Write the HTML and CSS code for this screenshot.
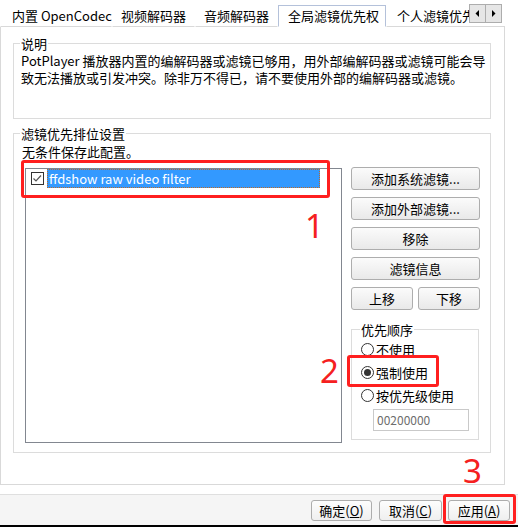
FILE: index.html
```html
<!DOCTYPE html>
<html lang="zh-CN">
<head>
    <meta charset="UTF-8">
    <title>全局滤镜优先权</title>
    <link rel="stylesheet" href="styles.css">
</head>
<body>
    <div class="tabbar">
        <div class="tabs">
            <div class="tab tab-codec">内置 OpenCodec</div>
            <div class="tab tab-video">视频解码器</div>
            <div class="tab tab-audio">音频解码器</div>
            <div class="tab tab-global active">全局滤镜优先权</div>
            <div class="tab tab-user">个人滤镜优先权</div>
        </div>
        <div class="arrows">
            <span class="arrow">
                <svg width="5" height="7" viewBox="0 0 5 7"><path d="M4 0v7L0.5 3.5z" fill="#000"/></svg>
            </span>
            <span class="arrow">
                <svg width="5" height="7" viewBox="0 0 5 7"><path d="M1 0v7l3.5-3.5z" fill="#000"/></svg>
            </span>
        </div>
    </div>

    <div class="panel">
        <fieldset class="group info">
            <legend>说明</legend>
            <p>PotPlayer 播放器内置的编解码器或滤镜已够用，用外部编解码器或滤镜可能会导<br>致无法播放或引发冲突。除非万不得已，请不要使用外部的编解码器或滤镜。</p>
        </fieldset>

        <fieldset class="group order">
            <legend>滤镜优先排位设置</legend>
            <p class="note">无条件保存此配置。</p>
            <div class="order-row">
                <div class="listbox">
                    <div class="item">
                        <span class="check">
                            <svg width="13" height="13" viewBox="0 0 13 13">
                                <rect x="0.5" y="0.5" width="12" height="12" fill="#fff" stroke="#333"/>
                                <path d="M2.5 6.5l2.5 2.5 5-5.5" fill="none" stroke="#555" stroke-width="1.2"/>
                            </svg>
                        </span>
                        <span class="item-label">ffdshow raw video filter</span>
                    </div>
                </div>
                <div class="side">
                    <button class="btn">添加系统滤镜...</button>
                    <button class="btn">添加外部滤镜...</button>
                    <button class="btn">移除</button>
                    <button class="btn">滤镜信息</button>
                    <div class="btn-pair">
                        <button class="btn">上移</button>
                        <button class="btn">下移</button>
                    </div>
                    <fieldset class="group priority">
                        <legend>优先顺序</legend>
                        <div class="radio"><span class="dot"></span>不使用</div>
                        <div class="radio"><span class="dot checked"></span>强制使用</div>
                        <div class="radio"><span class="dot"></span>按优先级使用</div>
                        <div class="merit">00200000</div>
                    </fieldset>
                </div>
            </div>
        </fieldset>
    </div>

    <div class="footer">
        <button class="btn ok">确定(<u>O</u>)</button>
        <button class="btn cancel">取消(<u>C</u>)</button>
        <button class="btn apply">应用(<u>A</u>)</button>
    </div>

    <div class="mark mark-1"></div>
    <div class="num num-1">1</div>
    <div class="mark mark-2"></div>
    <div class="num num-2">2</div>
    <div class="mark mark-3"></div>
    <div class="num num-3">3</div>
</body>
</html>
```

FILE: styles.css
```css
* {
    box-sizing: border-box;
}

body {
    margin: 0;
    width: 518px;
    height: 527px;
    overflow: hidden;
    position: relative;
    background: #fff;
    color: #000;
    font: 13px/17px "Noto Sans CJK SC", "Microsoft YaHei", sans-serif;
}

/* tab strip */
.tabbar {
    display: flex;
    width: 505px;
    height: 27px;
}

.tabs {
    display: flex;
    width: 469px;
    overflow: hidden;
    padding-top: 5px;
}

.tab {
    flex: none;
    height: 22px;
    line-height: 20px;
    white-space: nowrap;
    border: 1px solid transparent;
    border-bottom: 1px solid #d9d9d9;
}

.tab-codec { width: 112px; padding-left: 11px; }
.tab-video { width: 83px; padding-left: 8px; }
.tab-audio { width: 83px; padding-left: 8px; }
.tab-global { width: 108px; padding-left: 9px; }
.tab-user { width: 100px; padding-left: 10px; }

.tab.active {
    border-color: #b4c1da;
    border-bottom-color: #fff;
    background: #fff;
}

.arrows {
    display: flex;
    width: 36px;
    padding-top: 4px;
    border-bottom: 1px solid #d9d9d9;
}

.arrow {
    width: 17px;
    height: 19px;
    display: flex;
    align-items: center;
    justify-content: center;
    background: #e6e6e6;
    border: 1px solid #adadad;
}

.arrow + .arrow {
    margin-left: -1px;
}

/* page body */
.panel {
    width: 505px;
    height: 458px;
    border: 1px solid #d9d9d9;
    border-top: none;
    padding: 8px 0 0 12px;
}

.group {
    margin: 0;
    min-width: 0;
    border: 1px solid #dcdcdc;
    padding: 0 7px;
}

.group legend {
    padding: 0 1px;
    margin-left: -1px;
    line-height: 17px;
}

.group p {
    margin: 0;
    white-space: nowrap;
}

.info {
    width: 478px;
    padding-bottom: 32px;
}

.order {
    width: 478px;
    margin-top: 6px;
    padding-bottom: 9px;
}

.order .note {
    margin-top: 1px;
    padding-left: 1px;
}

.order-row {
    display: flex;
    align-items: flex-start;
    margin-top: 7px;
}

.listbox {
    width: 317px;
    height: 275px;
    margin: 1px 0 0 4px;
    border: 1px solid #828790;
}

.item {
    display: flex;
    align-items: center;
    height: 19px;
    padding-left: 5px;
}

.check {
    display: flex;
    width: 13px;
    height: 13px;
}

.item-label {
    width: 273px;
    height: 19px;
    margin-left: 3px;
    padding-left: 1px;
    line-height: 17px;
    color: #fff;
    background: #3399ff;
    border: 1px dotted #b86a2e;
}

.side {
    width: 129px;
    margin-left: 9px;
    display: flex;
    flex-direction: column;
}

.btn {
    height: 23px;
    padding: 0;
    font: inherit;
    line-height: 19px;
    color: #000;
    background: linear-gradient(#fbfbfb, #e9e9e9);
    border: 1px solid #adadad;
    border-radius: 3px;
}

.side > .btn {
    margin-bottom: 7px;
}

.btn-pair {
    display: flex;
    justify-content: space-between;
}

.btn-pair .btn {
    width: 62px;
}

.priority {
    width: 128px;
    margin-top: 11px;
    padding: 0 0 8px 9px;
}

.radio {
    display: flex;
    align-items: center;
    height: 23px;
    white-space: nowrap;
}

.dot {
    width: 13px;
    height: 13px;
    margin-right: 2px;
    border: 1px solid #333;
    border-radius: 50%;
    background: #fff;
    display: flex;
    align-items: center;
    justify-content: center;
}

.dot.checked::after {
    content: "";
    width: 7px;
    height: 7px;
    border-radius: 50%;
    background: #333;
}

.merit {
    width: 96px;
    height: 22px;
    margin: 2px 0 0 12px;
    padding-left: 3px;
    border: 1px solid #c9c9c9;
    font-size: 12px;
    line-height: 20px;
    color: #6d6d6d;
}

/* dialog buttons */
.footer {
    display: flex;
    justify-content: flex-end;
    height: 33px;
    margin-top: 9px;
    padding: 5px 8px 0 0;
    background: #f5f5f5;
    border-top: 1px solid #dfdfdf;
    border-bottom: 2px solid #000;
}

.footer .btn {
    height: 21px;
    line-height: 17px;
    background: linear-gradient(#fdfdfd, #efefef);
}

.footer .ok { width: 61px; margin-right: 7px; }
.footer .cancel { width: 63px; margin-right: 6px; }
.footer .apply { width: 62px; }

/* red annotations drawn over the screenshot */
.mark {
    position: absolute;
    border: 3px solid #ff1f1f;
    border-radius: 3px;
}

.mark-1 { left: 21px; top: 160px; width: 309px; height: 38px; }
.mark-2 { left: 347px; top: 355px; width: 92px; height: 32px; }
.mark-3 { left: 443px; top: 494px; width: 73px; height: 30px; }

.num {
    position: absolute;
    font: 33px/1 "Noto Sans", sans-serif;
    color: #f52020;
}

.num-1 { left: 305px; top: 209px; }
.num-2 { left: 320px; top: 354px; }
.num-3 { left: 463px; top: 454px; }
```
